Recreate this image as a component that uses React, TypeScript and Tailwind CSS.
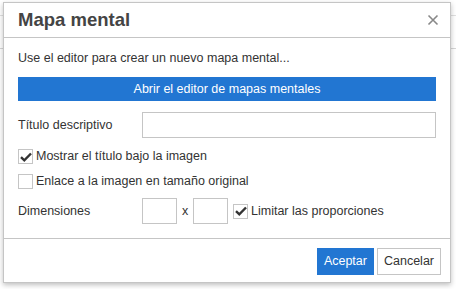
import React from "react";

function Check() {
  return (
    <svg width="12" height="10" viewBox="0 0 12 10" className="block">
      <path d="M1 5.2 L4.3 8.3 L11 1.5" fill="none" stroke="#333" strokeWidth="2.4" strokeLinejoin="miter" />
    </svg>
  );
}

function Box({ checked }: { checked?: boolean }) {
  return (
    <div className="w-[15px] h-[15px] border border-[#c5c5c5] bg-white flex items-center justify-center shrink-0">
      {checked ? <Check /> : null}
    </div>
  );
}

export default function App() {
  return (
    <div
      className="relative w-[456px] h-[289px] bg-white overflow-hidden text-[#333]"
      style={{ fontFamily: '"Liberation Sans", Arial, sans-serif' }}
    >
      <div className="absolute left-0 top-[15px] w-[3px] h-px bg-[#e0e0e0]" />
      <div className="absolute left-0 top-[48px] w-[3px] h-px bg-[#d6d6d6]" />
      <div className="absolute right-0 top-[15px] w-[5px] h-px bg-[#e0e0e0]" />
      <div className="absolute right-0 top-[48px] w-[5px] h-px bg-[#d6d6d6]" />
      <div className="absolute left-[3px] top-[2px] w-[448px] h-[281px] bg-white border border-[#c5c5c5] shadow-[0_2px_5px_rgba(0,0,0,0.25)] flex flex-col">
        <div className="h-[35px] border-b border-[#c5c5c5] flex items-center justify-between pl-[14px] pr-[10px]">
          <div className="text-[18.5px] font-bold text-[#444] leading-none">Mapa mental</div>
          <svg width="12" height="12" viewBox="0 0 12 12" className="mr-[1px]">
            <path d="M1.5 1.5 L10.5 10.5 M10.5 1.5 L1.5 10.5" stroke="#888" strokeWidth="1.6" />
          </svg>
        </div>
        <div className="flex-1 px-[14px] pt-[12px] text-[12.5px]">
          <div className="h-[16px] leading-[16px]">Use el editor para crear un nuevo mapa mental...</div>
          <div className="mt-[11px] h-[24px] bg-[#2276d2] text-white flex items-center justify-center">
            Abrir el editor de mapas mentales
          </div>
          <div className="mt-[11px] flex items-center h-[26px]">
            <div className="w-[124px]">Título descriptivo</div>
            <div className="w-[294px] h-[26px] border border-[#c5c5c5]" />
          </div>
          <div className="mt-[11px] flex items-center gap-[3px] h-[15px]">
            <Box checked />
            <span>Mostrar el título bajo la imagen</span>
          </div>
          <div className="mt-[10px] flex items-center gap-[3px] h-[15px]">
            <Box />
            <span>Enlace a la imagen en tamaño original</span>
          </div>
          <div className="mt-[9px] flex items-center h-[26px]">
            <div className="w-[124px]">Dimensiones</div>
            <div className="w-[35px] h-[26px] border border-[#c5c5c5]" />
            <div className="w-[16px] text-center">x</div>
            <div className="w-[35px] h-[26px] border border-[#c5c5c5]" />
            <div className="ml-[5px] flex items-center gap-[3px]">
              <Box checked />
              <span>Limitar las proporciones</span>
            </div>
          </div>
        </div>
        <div className="h-[44px] border-t border-[#c5c5c5] flex items-start justify-end gap-[3px] pt-[9px] pr-[9px] text-[12.5px]">
          <div className="h-[27px] px-[6px] bg-[#2276d2] text-white flex items-center border border-[#2276d2]">Aceptar</div>
          <div className="h-[27px] px-[6px] bg-white border border-[#c5c5c5] flex items-center">Cancelar</div>
        </div>
      </div>
    </div>
  );
}
